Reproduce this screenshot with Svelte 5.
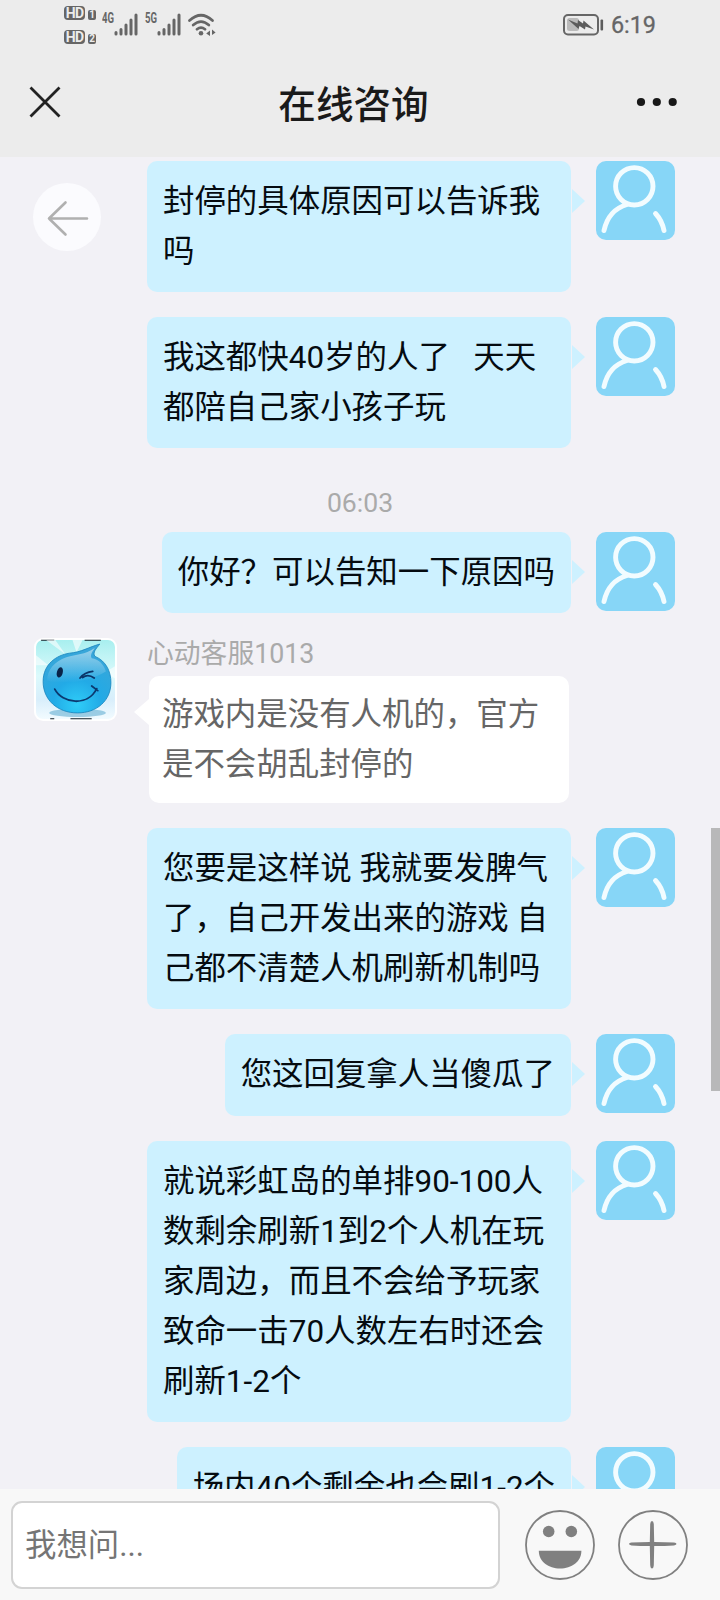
<script lang="ts">
  type Message = {
    from: "user" | "agent" | "time";
    lines: string[];
    name?: string;
  };

  const messages: Message[] = [
    { from: "user", lines: ["封停的具体原因可以告诉我", "吗"] },
    { from: "user", lines: ["我这都快40岁的人了   天天", "都陪自己家小孩子玩"] },
    { from: "time", lines: ["06:03"] },
    { from: "user", lines: ["你好？可以告知一下原因吗"] },
    { from: "agent", name: "心动客服1013", lines: ["游戏内是没有人机的，官方", "是不会胡乱封停的"] },
    { from: "user", lines: ["您要是这样说 我就要发脾气", "了，自己开发出来的游戏 自", "己都不清楚人机刷新机制吗"] },
    { from: "user", lines: ["您这回复拿人当傻瓜了"] },
    {
      from: "user",
      lines: [
        "就说彩虹岛的单排90-100人",
        "数剩余刷新1到2个人机在玩",
        "家周边，而且不会给予玩家",
        "致命一击70人数左右时还会",
        "刷新1-2个",
      ],
    },
    { from: "user", lines: ["场内40个剩余也会刷1-2个"] },
  ];

  let draft = $state("");
</script>

{#snippet hd(n: string)}
  <span class="hd"><b>HD</b><i>{n}</i></span>
{/snippet}

{#snippet signal(label: string)}
  <span class="signal">
    <span>{label}</span>
    <svg width="24" height="23" viewBox="0 0 24 23" aria-hidden="true">
      <path d="M2 19.5V21M7 16.5V21M12 12V21M17 7V21M22 2V21" />
    </svg>
  </span>
{/snippet}

<div class="phone">
  <header>
    <div class="status">
      <div class="hd-stack">
        {@render hd("1")}
        {@render hd("2")}
      </div>
      {@render signal("4G")}
      {@render signal("5G")}
      <svg class="wifi" width="28" height="24" viewBox="0 0 28 24" aria-hidden="true">
        <path d="M1.5 7.5Q13 -3 24.5 7.5M5.2 12Q13 5.2 20.8 12M9 16.2Q13 13 17 16.2" />
        <circle cx="13" cy="20.3" r="2.3" />
        <path class="tiny" d="M22 17.4V23L18.2 20.4ZM24 16.4V22L27.6 19.4Z" />
      </svg>
      <svg class="battery" width="42" height="22" viewBox="0 0 42 22" aria-hidden="true">
        <rect class="shell" x="1" y="1" width="34" height="19.5" rx="4" />
        <rect class="charge" x="4" y="4" width="12" height="13" rx="2.5" />
        <path class="bolt" d="M5 5.5L14.5 9.5L15 6L20 9.5L20.5 6.5L31 15.5L22.5 12.5L22 15.5L16.5 12L15.5 15Z" />
        <rect class="cap" x="37.5" y="5.5" width="2.6" height="11" rx="1" />
      </svg>
      <span class="clock">6:19</span>
    </div>
    <div class="titlebar">
      <button class="close" type="button" aria-label="关闭">
        <svg width="34" height="34" viewBox="0 0 34 34"><path d="M2.5 2.5L31.5 31.5M31.5 2.5L2.5 31.5" /></svg>
      </button>
      <h1>在线咨询</h1>
      <button class="more" type="button" aria-label="更多">
        <svg width="42" height="10" viewBox="0 0 42 10">
          <circle cx="5" cy="5" r="4.1" /><circle cx="20.8" cy="5" r="4.1" /><circle cx="36.7" cy="5" r="4.1" />
        </svg>
      </button>
    </div>
  </header>

  <main>
    <button class="back" type="button" aria-label="返回">
      <svg width="68" height="68" viewBox="0 0 68 68"><path d="M54 35.5H16M32.5 19.5L16 35.5L32.5 51.5" /></svg>
    </button>

    {#each messages as msg}
      {#if msg.from === "time"}
        <time>{msg.lines[0]}</time>
      {:else if msg.from === "agent"}
        <div class="row agent">
          <svg class="face" viewBox="0 0 82 82" aria-hidden="true">
            <defs>
              <linearGradient id="sky" x1="0" y1="0" x2="0" y2="1">
                <stop offset="0" stop-color="#a8efef" />
                <stop offset="0.45" stop-color="#dcfafc" />
                <stop offset="0.75" stop-color="#d8eefb" />
                <stop offset="1" stop-color="#f2fbff" />
              </linearGradient>
              <radialGradient id="drop" cx="0.5" cy="0.88" r="0.8">
                <stop offset="0" stop-color="#2fcdf8" />
                <stop offset="0.45" stop-color="#22aae6" />
                <stop offset="1" stop-color="#39a6d8" />
              </radialGradient>
              <linearGradient id="shine" x1="0" y1="0" x2="0" y2="1">
                <stop offset="0" stop-color="#fff" stop-opacity="0.5" />
                <stop offset="1" stop-color="#fff" stop-opacity="0" />
              </linearGradient>
            </defs>
            <rect width="82" height="82" rx="9" fill="#fff" />
            <rect x="2" y="2" width="78" height="78" rx="7" fill="url(#sky)" />
            <path d="M7 2.2H20M50 2.2H66M16 79.8H20M36 79.8H57" stroke="#17232b" stroke-width="1" />
            <path d="M12 2L31 16L21 2ZM38 2L42 14L48 2ZM2 17L14 27L2 27ZM80 28L70 34L80 40Z" fill="#fff" opacity="0.6" />
            <ellipse cx="43" cy="74" rx="28" ry="4" fill="#5aa9cd" opacity="0.55" />
            <path d="M65 6C61 11 58 14 60 18C72 23 76 34 76 44C76 62 62 74 43 74C23 74 9 61 9 43C9 26 22 17 35 15C47 14 54 9 65 6Z" fill="url(#drop)" stroke="#1784bd" stroke-width="0.8" />
            <path d="M60 10C50 17 42 16 32 19C20 23 13 32 13 42C29 47 55 43 71 33C69 26 64 21 57 20C55 17 58 13 60 10Z" fill="url(#shine)" />
            <ellipse cx="25.5" cy="34" rx="2.9" ry="5.2" transform="rotate(15 25.5 34)" fill="#092348" />
            <path d="M45.5 39.5C49 35 53 33.5 58 33M48 39C52 36 56 37 59.5 39.5" fill="none" stroke="#0b3467" stroke-width="1.8" stroke-linecap="round" />
            <path d="M20.5 50.5C28 65 53 68 62 50M57 47.5L63 52" fill="none" stroke="#0b3970" stroke-width="1.8" stroke-linecap="round" />
          </svg>
          <div class="reply">
            <span class="name">{msg.name}</span>
            <div class="bubble">
              {#each msg.lines as line}<p>{line}</p>{/each}
            </div>
          </div>
        </div>
      {:else}
        <div class="row user">
          <div class="bubble">
            {#each msg.lines as line}<p>{line}</p>{/each}
          </div>
          <svg class="avatar" viewBox="0 0 79 79" aria-hidden="true">
            <rect width="79" height="79" rx="10" />
            <circle cx="38.3" cy="25.3" r="18.7" />
            <path d="M31 43.5Q12.5 49 8 69.5M59.5 52.5Q66 59.5 68 69.5" />
          </svg>
        </div>
      {/if}
    {/each}
    <div class="scrollbar"></div>
  </main>

  <footer>
    <input type="text" placeholder="我想问..." bind:value={draft} />
    <button type="button" aria-label="表情">
      <svg width="70" height="70" viewBox="0 0 70 70">
        <circle class="ring" cx="35" cy="35" r="34" />
        <circle cx="23.7" cy="21.5" r="5.8" /><circle cx="46.3" cy="21.5" r="5.8" />
        <path d="M13.8 40.8H56.4C56.4 52 46.5 58.5 35 58.5S13.8 52 13.8 40.8Z" />
      </svg>
    </button>
    <button type="button" aria-label="添加">
      <svg width="70" height="70" viewBox="0 0 70 70">
        <circle class="ring" cx="35" cy="35" r="34" />
        <path d="M34 11Q35.5 11 35.8 14L36.2 32Q47 32 56 32.6Q58.5 33 58.5 34T56 35.4Q47 36 36.2 36L35.8 55Q35.5 58.5 34 58.5T32.2 55L31.8 36Q22 36 13.5 35.4Q11 35 11 34T13.5 32.6Q22 32 31.8 32L32.2 14Q32.5 11 34 11Z" />
      </svg>
    </button>
  </footer>
</div>

<style>
  :global(body) {
    margin: 0;
    background: #f2f1f6;
  }

  .phone {
    width: 720px;
    height: 1600px;
    display: flex;
    flex-direction: column;
    overflow: hidden;
    background: #f2f1f6;
    font-family: Roboto, "Noto Sans CJK SC", sans-serif;
  }

  button {
    padding: 0;
    border: 0;
    background: none;
  }

  svg {
    display: block;
  }

  header {
    flex: 0 0 157px;
    background: #ececec;
  }

  .status {
    height: 49px;
    box-sizing: border-box;
    padding: 0 64px;
    display: flex;
    align-items: center;
    color: #666;
  }

  .hd-stack {
    display: grid;
    gap: 10px;
    margin-right: 6px;
  }

  .hd {
    display: flex;
    align-items: flex-end;
    gap: 3px;
    height: 14px;
    line-height: 14px;
    color: #ececec;
  }

  .hd b {
    width: 21px;
    border-radius: 4px;
    background: #666;
    font-size: 14px;
    letter-spacing: -0.7px;
    text-align: center;
  }

  .hd i {
    width: 8px;
    height: 10px;
    border-radius: 2px;
    background: #666;
    font-size: 10px;
    font-style: normal;
    font-weight: 700;
    line-height: 10px;
    text-align: center;
  }

  .signal {
    display: flex;
    margin-right: 7px;
  }

  .signal span {
    width: 12px;
    font-size: 14.5px;
    font-weight: 700;
    line-height: 11px;
    transform: scaleX(0.66);
    transform-origin: left;
  }

  .signal path {
    fill: none;
    stroke: #666;
    stroke-width: 3;
    stroke-linecap: round;
  }

  .wifi {
    fill: #666;
  }

  .wifi path {
    fill: none;
    stroke: #666;
    stroke-width: 2.7;
    stroke-linecap: round;
  }

  .wifi .tiny {
    fill: #666;
    stroke: none;
  }

  .battery {
    margin-left: auto;
    margin-right: 6px;
  }

  .shell {
    fill: none;
    stroke: #666;
    stroke-width: 2;
  }

  .charge {
    fill: #bbb;
  }

  .bolt,
  .cap {
    fill: #5c5c5c;
  }

  .clock {
    font-size: 23.4px;
    font-weight: 400;
    line-height: 50px;
    -webkit-text-stroke: 0.3px #666;
  }

  .titlebar {
    height: 108px;
    box-sizing: border-box;
    padding: 0 42px 2px 28px;
    display: flex;
    align-items: center;
    justify-content: space-between;
  }

  .close path {
    stroke: #222;
    stroke-width: 2.8;
  }

  h1 {
    margin: 5px 0 0 9px;
    color: #1a1a1a;
    font-size: 37.6px;
    font-weight: 500;
    line-height: 50px;
  }

  .more svg {
    fill: #181818;
  }

  main {
    position: relative;
    flex: 1;
    min-height: 0;
    padding: 4px 45px 0 34px;
    display: flex;
    flex-direction: column;
    overflow: hidden;
  }

  .back {
    position: absolute;
    top: 26px;
    left: 33.4px;
    border-radius: 50%;
    background: #fbfbfe;
  }

  .back path {
    fill: none;
    stroke: #b0b0b0;
    stroke-width: 2.6;
    stroke-linecap: round;
    stroke-linejoin: round;
  }

  .row {
    flex: none;
    display: flex;
    align-items: flex-start;
    margin-bottom: 25px;
  }

  .user {
    justify-content: flex-end;
    gap: 25px;
  }

  .bubble {
    position: relative;
    box-sizing: border-box;
    padding: 16px 16px 15.2px;
    border-radius: 10px;
    background: #cdf1ff;
    color: #050b10;
    font-size: 31.45px;
    line-height: 50px;
  }

  .user .bubble:has(p + p) {
    width: 424px;
  }

  .bubble::after {
    content: "";
    position: absolute;
    top: 28px;
    left: calc(100% + 1px);
    border: solid transparent;
    border-width: 12px 0 12px 13px;
    border-left-color: #cdf1ff;
  }

  p {
    height: 50px;
    margin: 0;
    white-space: pre;
  }

  .avatar {
    flex: none;
    width: 79px;
    height: 79px;
    fill: none;
    stroke: #f2fcff;
    stroke-width: 4.9;
    stroke-linecap: round;
  }

  .avatar rect {
    fill: #87d6f7;
    stroke: none;
  }

  time {
    flex: none;
    height: 40px;
    margin: 9.6px 0 9.2px 11px;
    color: #aaa;
    font-size: 26.6px;
    line-height: 40px;
    text-align: center;
  }

  .agent {
    gap: 30px;
  }

  .face {
    flex: none;
    width: 83px;
    height: 83px;
  }

  .name {
    display: block;
    height: 37.8px;
    color: #aaa;
    font-size: 26.8px;
    line-height: 32px;
  }

  .agent .bubble {
    width: 420px;
    height: 127px;
    margin-left: 2px;
    padding: 13.5px 13px;
    background: #fff;
    color: #666;
  }

  .agent .bubble::after {
    top: 23px;
    right: 100%;
    left: auto;
    border-width: 13px 15px 13px 0;
    border-right-color: #fff;
  }

  .scrollbar {
    position: absolute;
    top: 671px;
    right: 0;
    width: 9px;
    height: 263px;
    background: #b8b8b9;
  }

  footer {
    flex: 0 0 111px;
    box-sizing: border-box;
    padding: 1px 32px 0 11px;
    display: flex;
    align-items: center;
    background: #f8f8f8;
  }

  footer button {
    margin-left: 25px;
  }

  footer button + button {
    margin-left: 23px;
  }

  input {
    width: 489px;
    height: 88px;
    box-sizing: border-box;
    padding: 1px 12px 0;
    border: 2px solid #d3d3d3;
    border-radius: 11px;
    background: #fff;
    font: inherit;
    font-size: 31.4px;
  }

  input::placeholder {
    color: #757575;
  }

  footer svg {
    fill: #808080;
  }

  footer .ring {
    fill: none;
    stroke: #808080;
    stroke-width: 1.8;
  }
</style>
